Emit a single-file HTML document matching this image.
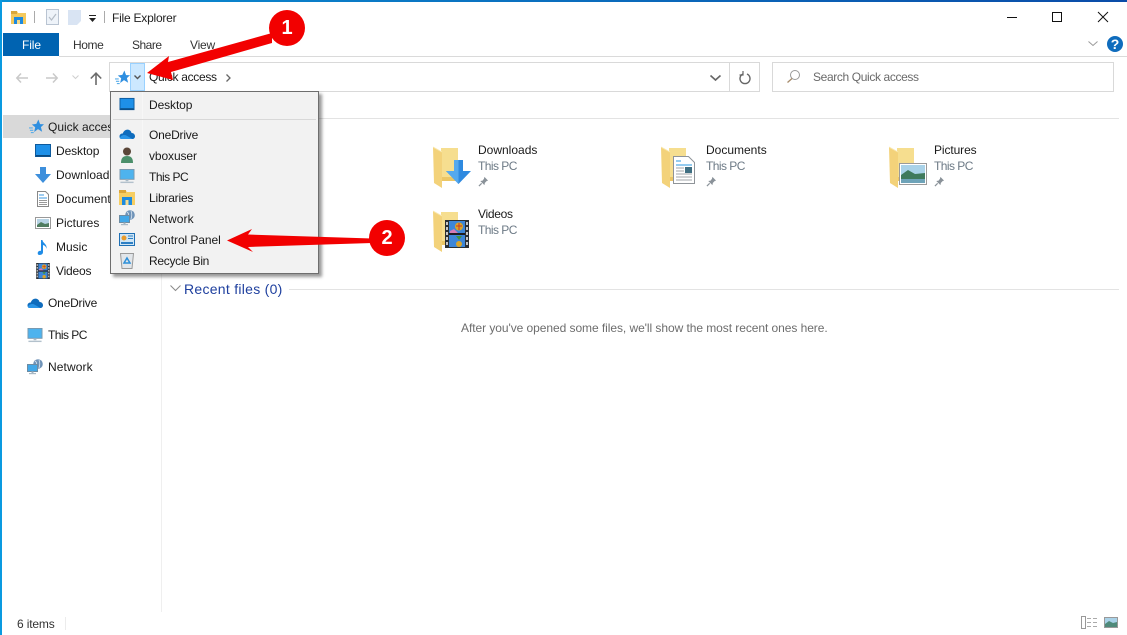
<!DOCTYPE html>
<html><head><meta charset="utf-8"><style>
*{box-sizing:border-box}
html,body{margin:0;padding:0;background:#fff}
#r{position:relative;width:1127px;height:635px;overflow:hidden;background:#fff;font-family:"Liberation Sans",sans-serif;font-size:12px;color:#1a1a1a}
.t{position:absolute;white-space:nowrap;line-height:16px}
.b{position:absolute}
svg{position:absolute;overflow:visible}
.g{color:#6d7a86;letter-spacing:-.55px}
</style></head><body><div id="r">
<svg width="0" height="0" style="position:absolute">
<defs>
<symbol id="star" viewBox="0 0 16 16"><path d="M10 .5l1.800 4.900 4.200.2-3.300 3 1.300 5-4.400-2.800-4.100 3 1.100-5-3.600-3 4.800-.6z" fill="#2f8fe0"/><path d="M0 9.500h4M1 12h3.500M2 14.500h3" stroke="#5aaeea" stroke-width="1.200"/></symbol>
<symbol id="desk" viewBox="0 0 16 16"><rect x=".5" y="1.500" width="15" height="12" fill="#1e90e8" stroke="#0e5a9c"/><rect x="1" y="12" width="14" height="1.500" fill="#0a4a80"/></symbol>
<symbol id="cloud" viewBox="0 0 16 10"><path d="M.5 7.500C.5 5.500 2 4.300 3.800 4.500 4.700 1.800 7 .2 9.500.8c1.700.4 2.800 1.700 3 3.200 2-.2 3.500 1.400 3.500 3.200 0 1.600-1.100 2.800-2.800 2.800H2.800C1.400 10 .5 9 .5 7.500z" fill="#0f6cbd"/><path d="M.8 9c1-2.500 3.500-3.600 6-2.800L13.500 10H2.800C1.900 10 1.200 9.700.8 9z" fill="#2a94e6"/></symbol>
<symbol id="pc" viewBox="0 0 16 16"><rect x=".5" y=".5" width="15" height="10.500" fill="#4eb3ee" stroke="#7a98ae"/><rect x="6.500" y="11" width="3" height="2" fill="#a9bbc8"/><rect x="1" y="13.500" width="14" height="1.500" fill="#b3c1cc"/></symbol>
<symbol id="net" viewBox="0 0 16 16"><circle cx="11" cy="5" r="4.800" fill="#6f93b8"/><path d="M8 2c2 1 2 4 1 6M12 1c1 2 1 5 0 8" stroke="#dce8f2" fill="none" stroke-width=".8"/><rect x=".5" y="5.500" width="10" height="7" fill="#42a8e8" stroke="#6d8ca3"/><rect x="4.500" y="12.500" width="2" height="1.500" fill="#9fb2c0"/><rect x="2" y="14" width="7" height="1.200" fill="#a9bac6"/></symbol>
<symbol id="fold" viewBox="0 0 26 42"><path d="M8 2h17v33H8z" fill="#f6de8f"/><path d="M0 1l9 5v36L1 37z" fill="#f3d27a"/><path d="M0 1l9 5" stroke="#f9e7ad"/><rect x="9" y="31" width="16" height="4" fill="#ecc766"/></symbol>
<symbol id="film" viewBox="0 0 24 28"><rect width="24" height="28" fill="#2a2f33"/><rect x="4" y="1" width="16" height="26" fill="#3c86d8"/><rect x="4" y="13" width="16" height="2" fill="#1d1d22"/><rect x="1" y="2" width="2" height="3" fill="#c8c8c8"/><rect x="1" y="7" width="2" height="3" fill="#c8c8c8"/><rect x="1" y="12" width="2" height="3" fill="#c8c8c8"/><rect x="1" y="17" width="2" height="3" fill="#c8c8c8"/><rect x="1" y="22" width="2" height="3" fill="#c8c8c8"/><rect x="21" y="2" width="2" height="3" fill="#c8c8c8"/><rect x="21" y="7" width="2" height="3" fill="#c8c8c8"/><rect x="21" y="12" width="2" height="3" fill="#c8c8c8"/><rect x="21" y="17" width="2" height="3" fill="#c8c8c8"/><rect x="21" y="22" width="2" height="3" fill="#c8c8c8"/><circle cx="14" cy="6.500" r="4" fill="#d9a52a"/><path d="M11 6h6M14 3v7" stroke="#c9342a"/><circle cx="14" cy="24" r="3" fill="#d9a52a"/><path d="M5 11l4-2 4 4H5z" fill="#d77bb5"/><path d="M11 16l3 4 3-4z" fill="#43913d"/></symbol>
<symbol id="pin" viewBox="0 0 12 12"><path d="M7 1l4 4-1.500.5-2 2L7 10 2.500 5.500 5 5l1.500-2z" fill="#8a9299"/><path d="M4 8l-3 3" stroke="#8a9299" stroke-width="1.300"/></symbol>
</defs></svg>

<!-- window borders -->
<div class="b" style="left:0;top:0;width:1127px;height:2px;background:linear-gradient(90deg,#0a90d4,#0a4ca8)"></div>
<div class="b" style="left:0;top:0;width:2px;height:635px;background:#0a9ae0"></div>

<!-- title bar -->
<svg style="left:10px;top:9px" width="17" height="16" viewBox="0 0 17 16"><path d="M1 2h6l1 2h8v11H1z" fill="#f4c95d"/><rect x="1" y="2" width="6" height="3" fill="#d9a73b"/><rect x="4" y="8" width="9" height="7" fill="#1c8ae0"/><rect x="7" y="11" width="3" height="4" fill="#f4d98a"/></svg>
<div class="b" style="left:34px;top:11px;width:1px;height:12px;background:#aaa"></div>
<svg style="left:46px;top:9px" width="13" height="16"><rect x=".5" y=".5" width="12" height="15" fill="#eef3f9" stroke="#b9c4d2"/><path d="M3 8l2.500 3L10 5" stroke="#b4bcc6" fill="none" stroke-width="1.200"/></svg>
<svg style="left:68px;top:10px" width="13" height="15"><rect width="13" height="15" fill="#d9e4f3"/><path d="M9 15l4-4v4z" fill="#fff"/></svg>
<svg style="left:89px;top:15px" width="8" height="7"><rect width="7" height="1" fill="#222"/><path d="M0 3h7L3.500 7z" fill="#222"/></svg>
<div class="b" style="left:104px;top:11px;width:1px;height:12px;background:#aaa"></div>
<div class="t" style="left:112px;top:10px;color:#222;letter-spacing:-.23px">File Explorer</div>
<svg style="left:1007px;top:10px" width="110" height="14" fill="none" stroke="#111"><path d="M0 7.500h10"/><rect x="45.500" y="2.500" width="9" height="9"/><path d="M91 2l10 10M101 2L91 12"/></svg>

<!-- ribbon tabs -->
<div class="b" style="left:3px;top:33px;width:56px;height:23px;background:#0063b1"></div>
<div class="t" style="left:22px;top:37px;color:#fff;letter-spacing:-.1px">File</div>
<div class="t" style="left:73px;top:37px;color:#333;letter-spacing:-.4px">Home</div>
<div class="t" style="left:132px;top:37px;color:#333;letter-spacing:-.5px">Share</div>
<div class="t" style="left:190px;top:37px;color:#333;letter-spacing:-.2px">View</div>
<div class="b" style="left:59px;top:56px;width:1068px;height:1px;background:#dadada"></div>
<svg style="left:1088px;top:41px" width="10" height="6" fill="none" stroke="#9a9a9a"><path d="M.5.500l4.500 4 4.500-4"/></svg>
<div class="b" style="left:1107px;top:36px;width:16px;height:16px;border-radius:50%;background:#0f6cbd;color:#fff;font-weight:bold;font-size:14px;line-height:16px;text-align:center">?</div>

<!-- nav -->
<svg style="left:16px;top:73px" width="12" height="10" fill="none" stroke="#c9c9c9" stroke-width="1.500"><path d="M1 5h11M5 .5L.8 5 5 9.500"/></svg>
<svg style="left:46px;top:73px" width="12" height="10" fill="none" stroke="#c9c9c9" stroke-width="1.500"><path d="M0 5h11M7 .5L11.200 5 7 9.500"/></svg>
<svg style="left:72px;top:75px" width="7" height="4" fill="none" stroke="#cfcfcf"><path d="M.5.500l3 3 3-3"/></svg>
<svg style="left:90px;top:72px" width="12" height="13" fill="none" stroke="#6b6b6b" stroke-width="1.600"><path d="M6 13V1.500M.8 6.500L6 1.200l5.200 5.300"/></svg>

<!-- address bar -->
<div class="b" style="left:109px;top:62px;width:651px;height:30px;border:1px solid #d9d9d9"></div>
<div class="b" style="left:729px;top:62px;width:1px;height:30px;background:#d9d9d9"></div>
<svg style="left:115px;top:70px" width="15" height="15"><use href="#star"/></svg>
<div class="b" style="left:130px;top:63px;width:15px;height:28px;background:#cce8ff;border:1px solid #99d1ff"></div>
<svg style="left:134px;top:75px" width="7" height="5" fill="none" stroke="#555" stroke-width="1.400"><path d="M.5.500L3.500 3.500 6.500.500"/></svg>
<div class="t" style="left:149px;top:69px;letter-spacing:-.3px">Quick access</div>
<svg style="left:226px;top:74px" width="5" height="8" fill="none" stroke="#666" stroke-width="1.300"><path d="M.5.500L4 4 .5 7.500"/></svg>
<svg style="left:710px;top:75px" width="11" height="7" fill="none" stroke="#666" stroke-width="1.600"><path d="M.5.500L5.500 5 10.500.500"/></svg>
<svg style="left:739px;top:71px" width="12" height="13" fill="none" stroke="#666" stroke-width="1.400"><path d="M4 3a5 5 0 1 0 4 0"/><path d="M4 0v4h-3.500" stroke-width="1.200"/></svg>

<!-- search -->
<div class="b" style="left:772px;top:62px;width:342px;height:30px;border:1px solid #d9d9d9"></div>
<svg style="left:787px;top:70px" width="13" height="13" fill="none" stroke="#999"><circle cx="8" cy="5" r="4.500"/><path d="M5 8.500L.5 12.500" stroke="#a78c6c" stroke-width="1.300"/></svg>
<div class="t" style="left:813px;top:69px;color:#6a6a6a;letter-spacing:-.37px">Search Quick access</div>

<!-- sidebar -->
<div class="b" style="left:3px;top:115px;width:108px;height:23px;background:#d9d9d9"></div>
<div class="b" style="left:161px;top:92px;width:1px;height:520px;background:#efefef"></div>
<svg style="left:29px;top:119px" width="15" height="15"><use href="#star"/></svg>
<div class="t" style="left:48px;top:119px">Quick acces</div>
<svg style="left:35px;top:143px" width="16" height="16"><use href="#desk"/></svg>
<div class="t" style="left:56px;top:143px;letter-spacing:-.1px">Desktop</div>
<svg style="left:35px;top:167px" width="16" height="16" viewBox="0 0 16 16"><path d="M5 0h6v7h5l-8 9-8-9h5z" fill="#3d8fdc"/></svg>
<div class="t" style="left:56px;top:167px">Download</div>
<svg style="left:37px;top:191px" width="12" height="16"><path d="M.5.500h8l3 3v12H.500z" fill="#fff" stroke="#888"/><path d="M2 4h5M2 7h8" stroke="#3d9ae0"/><path d="M2 9.500h8M2 11.500h8M2 13.500h8" stroke="#999"/></svg>
<div class="t" style="left:56px;top:191px">Document</div>
<svg style="left:35px;top:217px" width="16" height="12"><rect x=".5" y=".5" width="15" height="11" fill="#fff" stroke="#999"/><rect x="2" y="2" width="12" height="8" fill="#b6d3e4"/><path d="M2 8l4-3 4 2 4-1v4H2z" fill="#4f7c5f"/></svg>
<div class="t" style="left:56px;top:215px">Pictures</div>
<svg style="left:37px;top:239px" width="12" height="16"><path d="M4 1h1.500c0 3 5 4 4 9-.2-2-1.500-3.500-3.500-4v7c0 2-1.500 3-3.500 3S.500 14 1 13c.6-1 2-1.500 3-1z" fill="#1f8ce6"/></svg>
<div class="t" style="left:56px;top:239px">Music</div>
<svg style="left:36px;top:263px" width="14" height="16"><use href="#film" width="14" height="16"/></svg>
<div class="t" style="left:56px;top:263px;letter-spacing:-.2px">Videos</div>
<svg style="left:27px;top:298px" width="16" height="10"><use href="#cloud"/></svg>
<div class="t" style="left:48px;top:295px;letter-spacing:-.2px">OneDrive</div>
<svg style="left:27px;top:328px" width="16" height="15"><use href="#pc"/></svg>
<div class="t" style="left:48px;top:327px;letter-spacing:-.55px">This PC</div>
<svg style="left:27px;top:359px" width="16" height="16"><use href="#net"/></svg>
<div class="t" style="left:48px;top:359px;letter-spacing:.1px">Network</div>

<!-- content -->
<div class="b" style="left:319px;top:118px;width:800px;height:1px;background:#e3e3e3"></div>
<svg style="left:433px;top:146px" width="26" height="42"><use href="#fold"/></svg>
<svg style="left:446px;top:160px" width="25" height="25" viewBox="0 0 25 25"><path d="M8 0h9v11h8L12.500 24 0 11h8z" fill="#2f8ae0"/><path d="M8 0h4.500v24L0 11h8z" fill="#55a9ee"/></svg>
<div class="t" style="left:478px;top:142px">Downloads</div>
<div class="t g" style="left:478px;top:158px">This PC</div>
<svg style="left:478px;top:176px" width="11" height="11"><use href="#pin"/></svg>

<svg style="left:661px;top:146px" width="26" height="42"><use href="#fold"/></svg>
<svg style="left:673px;top:156px" width="22" height="28"><path d="M.5.500h15l6 6v21H.500z" fill="#fff" stroke="#8f9499"/><path d="M3 5h5M3 9h16" stroke="#2b9ae0"/><path d="M3 12h8M3 15h8M3 18h16M3 21h16M3 24h16" stroke="#a0a5aa"/><rect x="12" y="11" width="7" height="6" fill="#3f6f82"/></svg>
<div class="t" style="left:706px;top:142px">Documents</div>
<div class="t g" style="left:706px;top:158px">This PC</div>
<svg style="left:706px;top:176px" width="11" height="11"><use href="#pin"/></svg>

<svg style="left:889px;top:146px" width="26" height="42"><use href="#fold"/></svg>
<svg style="left:899px;top:163px" width="28" height="22"><rect x=".5" y=".5" width="27" height="21" fill="#fff" stroke="#9a9a9a"/><rect x="2" y="2" width="24" height="18" fill="#a9d2e8"/><path d="M2 12l7-5 7 4 10-1v10H2z" fill="#3f7a5c"/><rect x="2" y="16" width="24" height="4" fill="#6ea3b8"/></svg>
<div class="t" style="left:934px;top:142px;letter-spacing:-.1px">Pictures</div>
<div class="t g" style="left:934px;top:158px">This PC</div>
<svg style="left:934px;top:176px" width="11" height="11"><use href="#pin"/></svg>

<svg style="left:433px;top:210px" width="26" height="42"><use href="#fold"/></svg>
<svg style="left:445px;top:220px" width="24" height="28"><use href="#film" width="24" height="28"/></svg>
<div class="t" style="left:478px;top:206px;letter-spacing:-.3px">Videos</div>
<div class="t g" style="left:478px;top:222px">This PC</div>

<svg style="left:170px;top:285px" width="11" height="7" fill="none" stroke="#8a8a8a"><path d="M.5.500L5.500 5.500 10.500.500"/></svg>
<div class="t" style="left:184px;top:280px;font-size:14px;line-height:18px;color:#1e3f9e;letter-spacing:.28px">Recent files (0)</div>
<div class="b" style="left:289px;top:289px;width:830px;height:1px;background:#e3e3e3"></div>
<div class="t" style="left:461px;top:320px;color:#6d6d6d;letter-spacing:-.06px">After you've opened some files, we'll show the most recent ones here.</div>

<!-- dropdown -->
<div class="b" style="left:110px;top:91px;width:209px;height:183px;background:#f2f2f2;border:1px solid #6e6e6e;box-shadow:3px 3px 3px rgba(0,0,0,.4)"></div>
<div class="b" style="left:142px;top:92px;width:1px;height:181px;background:#f7f7f7"></div>
<div class="b" style="left:113px;top:119px;width:203px;height:1px;background:#d8d8d8"></div>
<svg style="left:119px;top:97px" width="16" height="15"><use href="#desk"/></svg>
<div class="t" style="left:149px;top:97px;letter-spacing:-.1px">Desktop</div>
<svg style="left:119px;top:129px" width="16" height="10"><use href="#cloud"/></svg>
<div class="t" style="left:149px;top:127px;letter-spacing:-.2px">OneDrive</div>
<svg style="left:120px;top:147px" width="14" height="16"><circle cx="7" cy="4.500" r="4" fill="#5a4638"/><path d="M1 16c0-5 2-7 6-7s6 2 6 7z" fill="#4b8f6a"/></svg>
<div class="t" style="left:149px;top:148px;letter-spacing:-.1px">vboxuser</div>
<svg style="left:119px;top:169px" width="16" height="15"><use href="#pc"/></svg>
<div class="t" style="left:149px;top:169px;letter-spacing:-.5px">This PC</div>
<svg style="left:119px;top:190px" width="16" height="15"><path d="M0 0h6l2 2h8v13H0z" fill="#f6ce62"/><rect width="7" height="3" fill="#dca63a"/><rect x="3" y="7" width="10" height="8" fill="#1c8ae0"/><rect x="6.500" y="10" width="3" height="5" fill="#f6dc90"/></svg>
<div class="t" style="left:149px;top:190px;letter-spacing:-.2px">Libraries</div>
<svg style="left:119px;top:210px" width="16" height="16"><use href="#net"/></svg>
<div class="t" style="left:149px;top:211px;letter-spacing:.1px">Network</div>
<svg style="left:119px;top:233px" width="16" height="13"><rect x=".5" y=".5" width="15" height="12" fill="#cfe5f5" stroke="#1f70b5"/><circle cx="5" cy="5" r="2.500" fill="#e89b2b"/><path d="M9 3h5M9 5.500h5" stroke="#2d7fc4"/><rect x="2" y="9" width="12" height="2" fill="#2d7fc4"/></svg>
<div class="t" style="left:149px;top:232px;letter-spacing:-.08px">Control Panel</div>
<svg style="left:120px;top:253px" width="14" height="16"><path d="M.5.500h13l-1.500 15H2z" fill="#e2e6ea" stroke="#9a9a9a"/><path d="M7 5l3 5H4z" fill="none" stroke="#2d8fd8" stroke-width="1.500"/></svg>
<div class="t" style="left:149px;top:253px;letter-spacing:-.3px">Recycle Bin</div>

<!-- annotations -->
<svg style="left:0;top:0" width="1127" height="635"><path d="M272 33L168 62l1-6-22 17 26 7-2-8 101-29z" fill="#f20000"/><circle cx="287" cy="28" r="18" fill="#f20000"/><path d="M372 238.500L248 234.500l4-5.500-25 11.500 26 11.500-5-5 124-4z" fill="#f20000"/><circle cx="387" cy="238" r="18" fill="#f20000"/></svg>
<div class="t" style="left:277px;top:18px;width:20px;text-align:center;color:#fff;font-weight:bold;font-size:20px;line-height:20px">1</div>
<div class="t" style="left:377px;top:228px;width:20px;text-align:center;color:#fff;font-weight:bold;font-size:20px;line-height:20px">2</div>

<!-- status bar -->
<div class="t" style="left:17px;top:616px;color:#333;letter-spacing:-.15px">6 items</div>
<div class="b" style="left:65px;top:617px;width:1px;height:13px;background:#ececec"></div>
<svg style="left:1081px;top:616px" width="18" height="13"><rect x=".5" y=".5" width="4" height="12" fill="none" stroke="#999"/><path d="M6 2.500h4M12 2.500h4M6 6.500h4M12 6.500h4M6 10.500h4M12 10.500h4" stroke="#aaa"/></svg>
<svg style="left:1104px;top:617px" width="14" height="11"><rect x=".5" y=".5" width="13" height="10" fill="#a9d2e8" stroke="#999"/><path d="M1 7l4-3 4 2 4-1v5H1z" fill="#4f8a7a"/></svg>
</div></body></html>
